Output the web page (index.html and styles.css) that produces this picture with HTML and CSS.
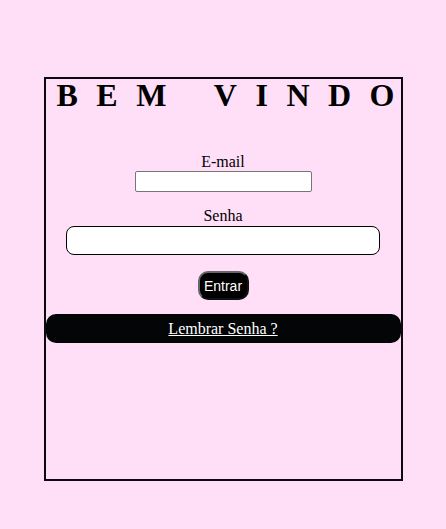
FILE: index.html
```html
<!DOCTYPE html>
<html lang="pt">
<head>
<meta charset="utf-8">
<title>Login</title>
<link rel="stylesheet" href="styles.css">
</head>
<body>
<div class="box">
  <h1 class="title">BEM VINDO</h1>
  <form class="form">
    <label class="label" for="email">E-mail</label>
    <input class="input-email" type="text" id="email">
    <label class="label label-senha" for="senha">Senha</label>
    <input class="input-senha" type="password" id="senha">
    <button class="btn" type="button">Entrar</button>
  </form>
  <div class="remember"><a href="#" class="remember-link">Lembrar Senha ?</a></div>
</div>
</body>
</html>
```
FILE: styles.css
```css
html, body {
  margin: 0;
  padding: 0;
  background: #ffdff7;
}
body {
  font-family: "Liberation Serif", "Times New Roman", serif;
  font-size: 16px;
  color: #000;
  padding-top: 77px;
}
.box {
  box-sizing: border-box;
  width: 359px;
  height: 404px;
  margin: 0 auto;
  border: 2px solid #0a0a10;
}
.title {
  margin: 0;
  padding-left: 11px;
  font-size: 32px;
  line-height: 32px;
  font-weight: bold;
  letter-spacing: 18.5px;
  word-spacing: 3px;
  white-space: nowrap;
  text-align: left;
}
.form {
  display: flex;
  flex-direction: column;
  align-items: center;
  margin: 41px 0 0;
}
.label {
  display: block;
  line-height: 19px;
}
.label-senha {
  margin-top: 14px;
}
.input-email {
  box-sizing: border-box;
  width: 177px;
  height: 21px;
  margin: 0;
  border: 1px solid #767676;
  border-radius: 2px;
  background: #fff;
}
.input-senha {
  box-sizing: border-box;
  width: 314px;
  height: 29px;
  margin: 1px 0 0;
  border: 1px solid #000;
  border-radius: 8px;
  background: #fff;
}
.btn {
  box-sizing: border-box;
  margin-top: 16px;
  width: 51px;
  height: 29px;
  padding: 0;
  background: #000;
  color: #fff;
  border: 2px outset #666;
  border-radius: 10px;
  font-family: "Liberation Sans", Arial, sans-serif;
  font-size: 14px;
}
.remember {
  box-sizing: border-box;
  margin-top: 14px;
  height: 29px;
  background: #030507;
  border-radius: 10px;
  display: flex;
  align-items: center;
  justify-content: center;
}
.remember-link {
  color: #fff;
  text-decoration: underline;
  font-size: 16px;
}
```
